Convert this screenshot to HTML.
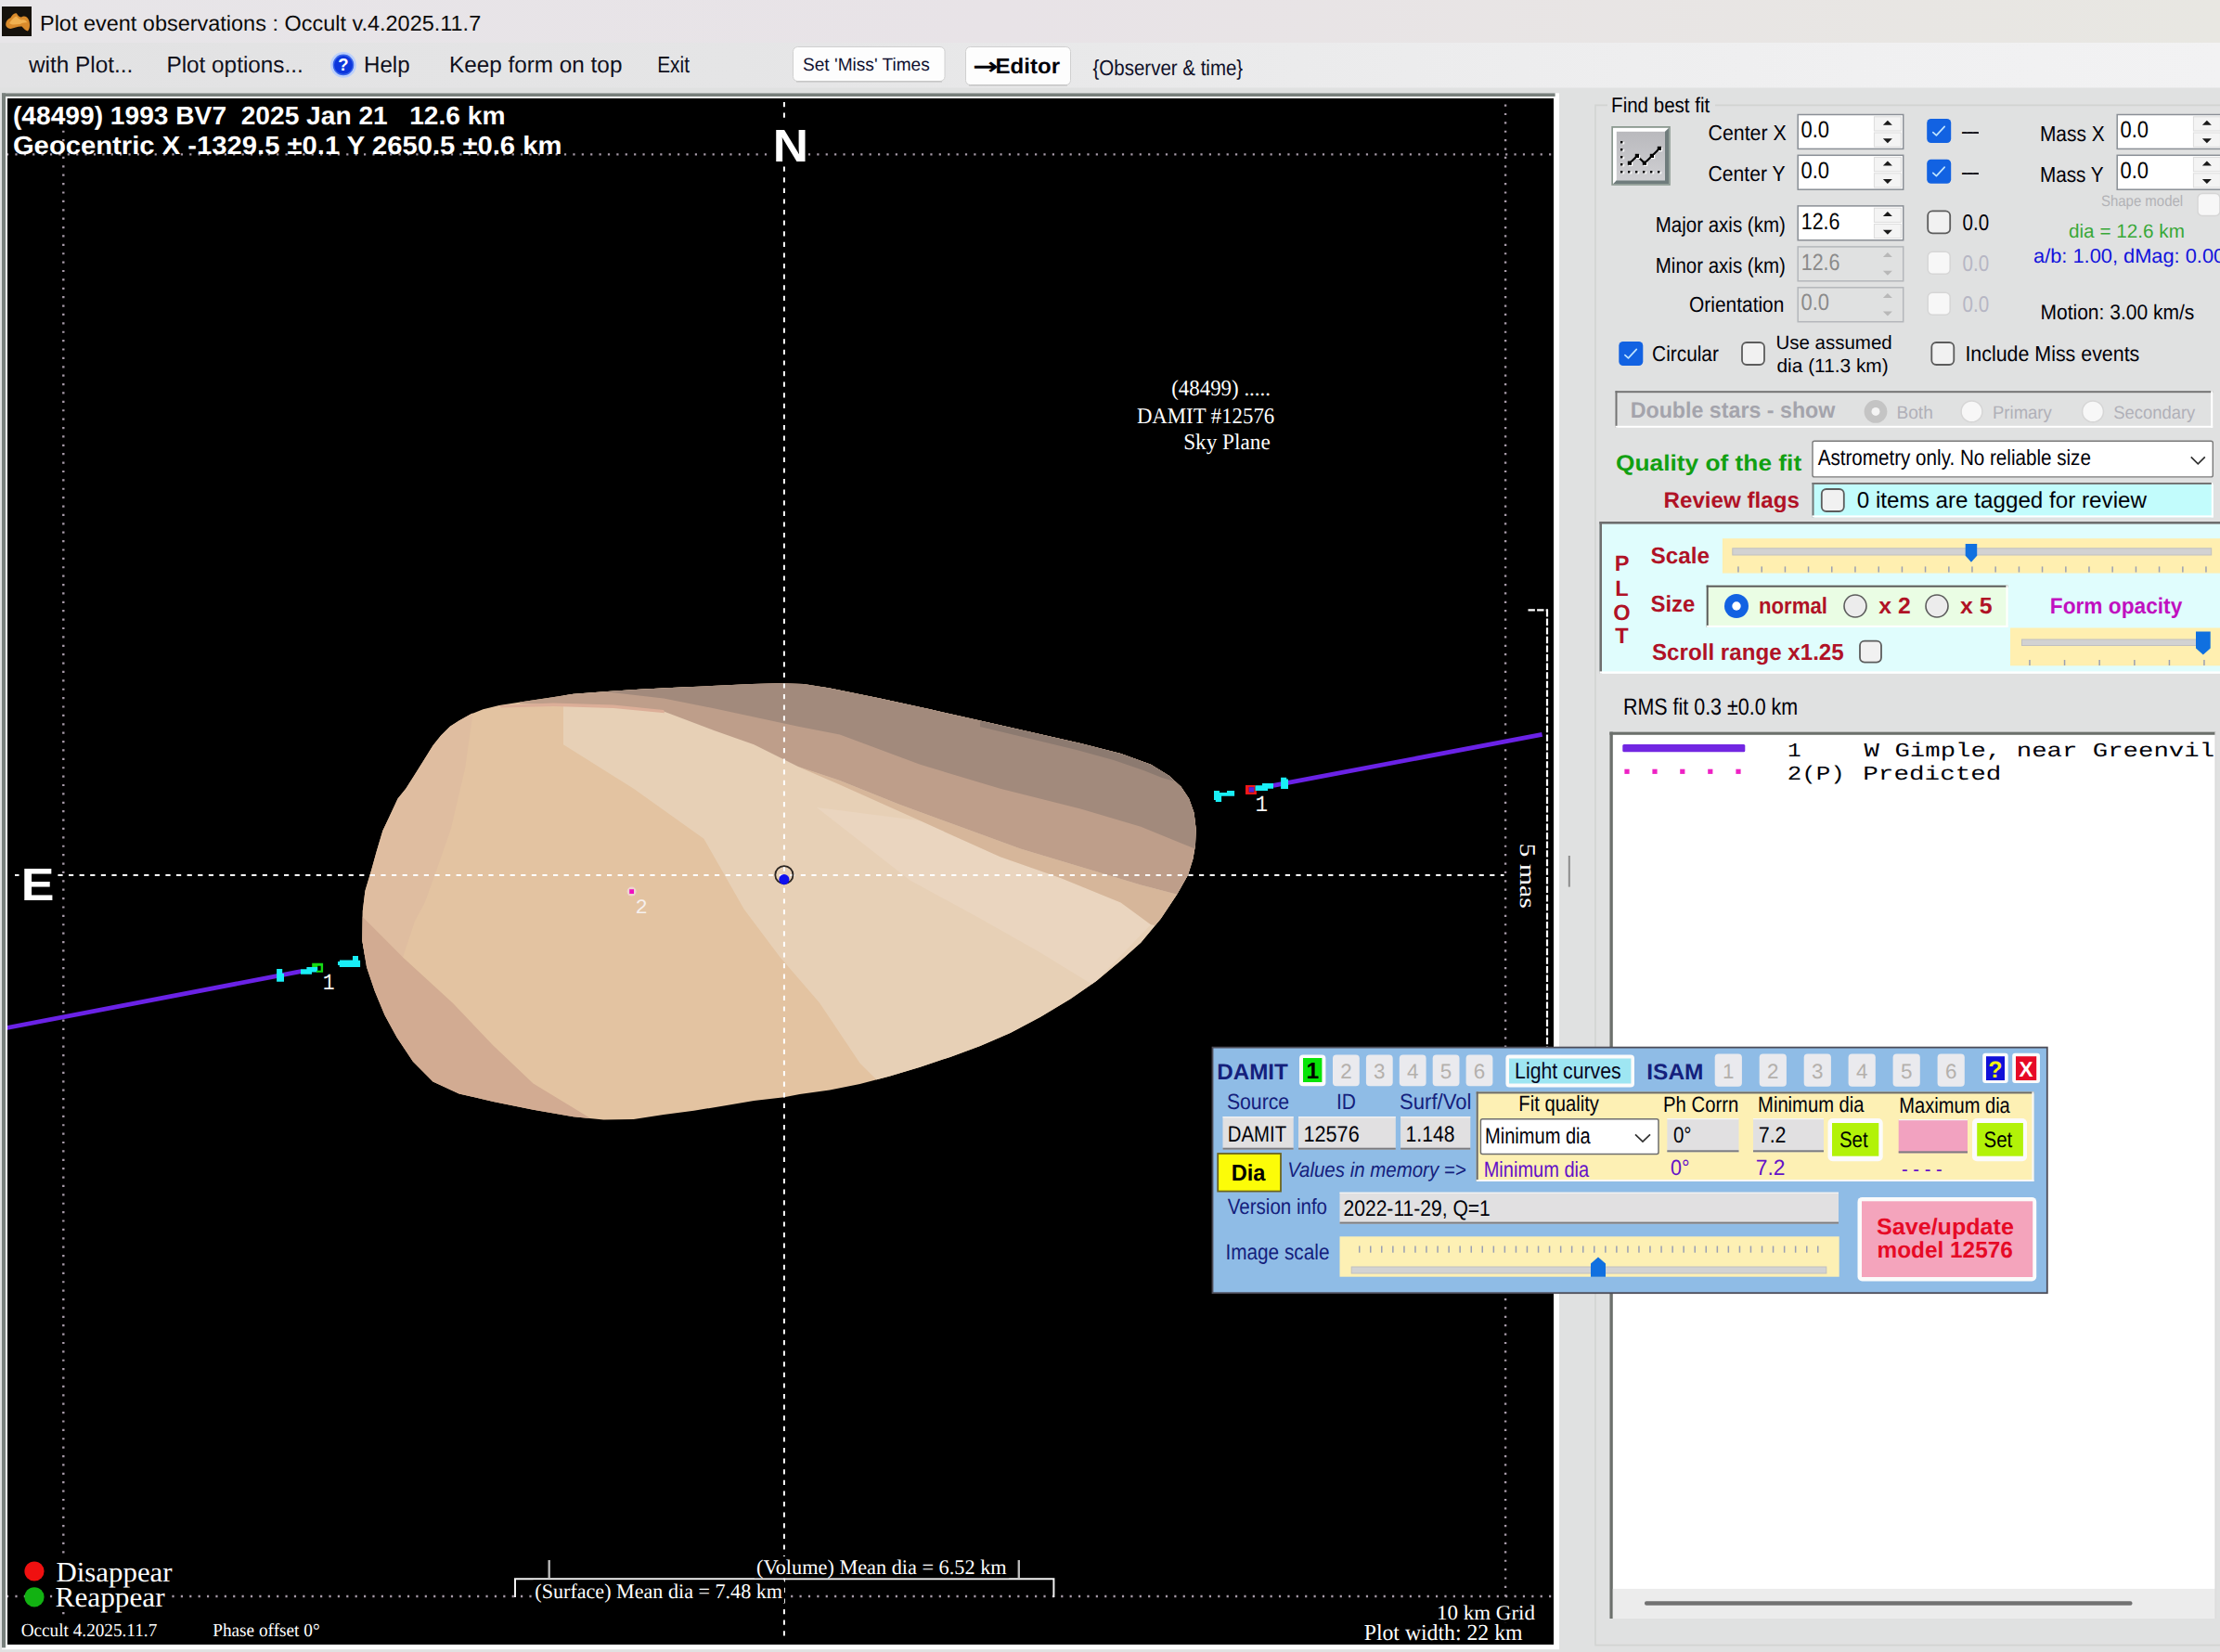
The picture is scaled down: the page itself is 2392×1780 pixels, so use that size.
<!DOCTYPE html>
<html lang="en">
<head>
<meta charset="utf-8">
<title>Plot event observations : Occult v.4.2025.11.7</title>
<style>
html, body { margin: 0; padding: 0; background: #e0e1e1; }
body { width: 2392px; height: 1780px; font-family: "Liberation Sans", Arial, sans-serif; }
svg { display: block; }
text { white-space: pre; }
</style>
</head>
<body>
<svg width="2392" height="1780" viewBox="0 0 2392 1780" shape-rendering="auto" text-rendering="geometricPrecision">
<rect x="0.0" y="0.0" width="2392.0" height="1780.0" fill="#e0e1e1"/>
<linearGradient id="tbar" x1="0" y1="0" x2="1" y2="0"><stop offset="0" stop-color="#e7e5e8"/><stop offset="0.45" stop-color="#e8e3e7"/><stop offset="1" stop-color="#e8e7e2"/></linearGradient>
<linearGradient id="mbar" x1="0" y1="0" x2="1" y2="0"><stop offset="0" stop-color="#e2e2e3"/><stop offset="0.33" stop-color="#e5e5e6"/><stop offset="0.585" stop-color="#ebebec"/><stop offset="0.836" stop-color="#f0f0f1"/><stop offset="1" stop-color="#f2f2f3"/></linearGradient>
<rect x="0.0" y="0.0" width="2392.0" height="46.0" fill="url(#tbar)"/>
<rect x="0.0" y="46.0" width="2392.0" height="48.5" fill="url(#mbar)"/>
<rect x="2.0" y="7.0" width="32.0" height="32.0" fill="#15110c"/>
<path d="M6.5 28 C5.5 24 8 20.5 11.5 19 C13 16 15.5 13.5 18 14.5 C19.5 17 21 18.5 23 18.5 C26 16.5 29.5 18 31 21.5 C32.5 25.5 32.5 30.5 30 33.5 C27 33 25.5 30.5 23.5 28.5 C20 28 15.5 30 11.5 31 C9.5 31 7.5 30 6.5 28 Z" fill="#d98a2b"/>
<path d="M10 25 C12.5 21 15.5 18 18 17.5 C19 19.5 21 21 23.5 21.5 C26 20.5 28.5 22 29.5 24.5 C27 24 24 25 21.5 26 C17.5 26 13.5 27.5 10 25 Z" fill="#f0b050"/>
<text x="43.0" y="32.7" font-size="23.2" fill="#0a0a0a" font-family='"Liberation Sans", Arial, sans-serif' textLength="475.2" lengthAdjust="spacingAndGlyphs" xml:space="preserve">Plot event observations : Occult v.4.2025.11.7</text>
<text x="31.0" y="77.6" font-size="24.6" fill="#10101c" font-family='"Liberation Sans", Arial, sans-serif' textLength="112.4" lengthAdjust="spacingAndGlyphs" xml:space="preserve">with Plot...</text>
<text x="179.5" y="77.6" font-size="24.6" fill="#10101c" font-family='"Liberation Sans", Arial, sans-serif' textLength="147.2" lengthAdjust="spacingAndGlyphs" xml:space="preserve">Plot options...</text>
<circle cx="370" cy="69.9" r="12.4" fill="#0c36dc" stroke="#bcd0fa" stroke-width="3"/>
<circle cx="370" cy="69.9" r="10.6" fill="none" stroke="#3a66ea" stroke-width="1.4"/>
<text x="370.0" y="76.4" font-size="18.5" fill="#ffffff" font-family='"Liberation Sans", Arial, sans-serif' font-weight="bold" text-anchor="middle" xml:space="preserve">?</text>
<text x="392.0" y="77.6" font-size="24.6" fill="#10101c" font-family='"Liberation Sans", Arial, sans-serif' textLength="49.6" lengthAdjust="spacingAndGlyphs" xml:space="preserve">Help</text>
<text x="484.0" y="77.6" font-size="24.6" fill="#10101c" font-family='"Liberation Sans", Arial, sans-serif' textLength="186.4" lengthAdjust="spacingAndGlyphs" xml:space="preserve">Keep form on top</text>
<text x="708.2" y="77.6" font-size="24.6" fill="#10101c" font-family='"Liberation Sans", Arial, sans-serif' textLength="34.8" lengthAdjust="spacingAndGlyphs" xml:space="preserve">Exit</text>
<rect x="854.5" y="50.5" width="163.5" height="37.0" fill="#fdfdfd" stroke="#d0d0d0" stroke-width="1" rx="5"/>
<line x1="858.0" y1="88.0" x2="1015.0" y2="88.0" stroke="#bdbdbd" stroke-width="1.2" />
<text x="865.0" y="76.2" font-size="19.4" fill="#101030" font-family='"Liberation Sans", Arial, sans-serif' textLength="136.8" lengthAdjust="spacingAndGlyphs" xml:space="preserve">Set &#x27;Miss&#x27; Times</text>
<rect x="1040.5" y="50.5" width="113.0" height="41.0" fill="#fdfdfd" stroke="#d0d0d0" stroke-width="1" rx="5"/>
<line x1="1044.0" y1="92.0" x2="1150.0" y2="92.0" stroke="#bdbdbd" stroke-width="1.2" />
<text x="1047.9" y="79.6" font-size="25" fill="#000008" font-family='"DejaVu Sans", "Liberation Sans", sans-serif' font-weight="bold" textLength="27.6" lengthAdjust="spacingAndGlyphs" xml:space="preserve">→</text>
<text x="1072.6" y="79.0" font-size="23.2" fill="#000008" font-family='"Liberation Sans", Arial, sans-serif' font-weight="bold" textLength="69.4" lengthAdjust="spacingAndGlyphs" xml:space="preserve">Editor</text>
<text x="1177.5" y="81.4" font-size="23.4" fill="#101028" font-family='"Liberation Sans", Arial, sans-serif' textLength="161.7" lengthAdjust="spacingAndGlyphs" xml:space="preserve">{Observer &amp; time}</text>
<rect x="2.0" y="100.4" width="1678.0" height="1676.8" fill="#ffffff"/>
<rect x="2.0" y="100.4" width="1673.6" height="3.6" fill="#78807c"/>
<rect x="2.0" y="100.4" width="4.0" height="1675.0" fill="#78807c"/>
<rect x="8.0" y="106.0" width="1666.0" height="1666.0" fill="#000000"/>
<clipPath id="plotclip"><rect x="8" y="106" width="1666" height="1666"/></clipPath>
<g clip-path="url(#plotclip)">
<line x1="68.3" y1="112.5" x2="68.3" y2="1772.0" stroke="#a79aa8" stroke-width="2.4" stroke-dasharray="2.2 7.19"/>
<line x1="1622.1" y1="112.5" x2="1622.1" y2="1772.0" stroke="#a79aa8" stroke-width="2.4" stroke-dasharray="2.2 7.19"/>
<line x1="7.0" y1="166.4" x2="1674.0" y2="166.4" stroke="#a79aa8" stroke-width="2.4" stroke-dasharray="2.2 7.19"/>
<line x1="7.0" y1="1720.0" x2="1674.0" y2="1720.0" stroke="#a79aa8" stroke-width="2.4" stroke-dasharray="2.2 7.19"/>
<clipPath id="body"><path d="M840.0 736.2 L866.0 736.9 L894.0 741.6 L948.1 752.4 L1002.2 764.3 L1056.2 776.6 L1110.3 788.8 L1164.3 801.1 L1207.6 811.9 L1240.0 823.8 L1259.5 835.7 L1272.4 847.6 L1281.1 860.5 L1286.5 875.7 L1288.6 893.0 L1288.0 910.3 L1285.4 925.4 L1280.0 942.7 L1268.1 963.8 L1250.8 989.7 L1229.2 1015.7 L1207.6 1035.1 L1181.6 1056.8 L1153.5 1076.2 L1121.1 1095.7 L1088.6 1113.0 L1056.2 1127.0 L1023.8 1138.9 L991.4 1149.7 L958.9 1159.5 L926.5 1168.1 L894.1 1174.6 L861.6 1178.9 L844.9 1182.3 L812.4 1186.0 L780.0 1191.4 L747.6 1196.8 L715.1 1201.1 L682.7 1206.0 L650.3 1206.5 L617.8 1203.2 L574.6 1195.7 L531.4 1187.0 L494.6 1178.4 L466.5 1165.4 L444.9 1143.8 L427.6 1117.8 L414.6 1094.0 L403.8 1068.1 L395.1 1042.2 L390.4 1014.0 L390.8 981.6 L393.4 960.0 L400.5 936.2 L405.9 916.8 L412.4 895.1 L420.0 878.9 L428.6 860.5 L437.3 849.7 L447.0 834.6 L457.8 817.3 L466.5 803.2 L475.1 792.4 L484.9 782.7 L494.6 776.6 L507.6 769.3 L520.5 764.3 L537.8 760.0 L570.3 755.0 L594.0 751.4 L617.8 747.7 L654.6 744.9 L689.2 742.7 L723.8 741.0 L767.0 739.0 L810.3 736.9 Z"/></clipPath>
<path d="M840.0 736.2 L866.0 736.9 L894.0 741.6 L948.1 752.4 L1002.2 764.3 L1056.2 776.6 L1110.3 788.8 L1164.3 801.1 L1207.6 811.9 L1240.0 823.8 L1259.5 835.7 L1272.4 847.6 L1281.1 860.5 L1286.5 875.7 L1288.6 893.0 L1288.0 910.3 L1285.4 925.4 L1280.0 942.7 L1268.1 963.8 L1250.8 989.7 L1229.2 1015.7 L1207.6 1035.1 L1181.6 1056.8 L1153.5 1076.2 L1121.1 1095.7 L1088.6 1113.0 L1056.2 1127.0 L1023.8 1138.9 L991.4 1149.7 L958.9 1159.5 L926.5 1168.1 L894.1 1174.6 L861.6 1178.9 L844.9 1182.3 L812.4 1186.0 L780.0 1191.4 L747.6 1196.8 L715.1 1201.1 L682.7 1206.0 L650.3 1206.5 L617.8 1203.2 L574.6 1195.7 L531.4 1187.0 L494.6 1178.4 L466.5 1165.4 L444.9 1143.8 L427.6 1117.8 L414.6 1094.0 L403.8 1068.1 L395.1 1042.2 L390.4 1014.0 L390.8 981.6 L393.4 960.0 L400.5 936.2 L405.9 916.8 L412.4 895.1 L420.0 878.9 L428.6 860.5 L437.3 849.7 L447.0 834.6 L457.8 817.3 L466.5 803.2 L475.1 792.4 L484.9 782.7 L494.6 776.6 L507.6 769.3 L520.5 764.3 L537.8 760.0 L570.3 755.0 L594.0 751.4 L617.8 747.7 L654.6 744.9 L689.2 742.7 L723.8 741.0 L767.0 739.0 L810.3 736.9 Z" fill="#e3c3a1" />
<g clip-path="url(#body)">
<path d="M380.0 720.0 L511.0 720.0 L509.7 767.6 L501.1 828.1 L485.9 893.0 L470.8 936.2 L458.0 972.0 L447.0 992.4 L434.1 1031.4 L380.0 1031.4 Z" fill="#dfbda0" />
<path d="M380.0 978.0 L390.8 988.1 L434.1 1031.4 L488.1 1081.1 L531.4 1126.5 L574.6 1167.6 L635.1 1204.3 L640.0 1230.0 L380.0 1230.0 Z" fill="#d2ab92" />
<path d="M607.0 761.1 L607.0 802.2 L682.7 849.7 L758.4 903.8 L801.6 979.5 L840.0 1030.8 L883.0 1080.5 L926.5 1145.4 L943.8 1162.7 L950.0 1180.0 L1320.0 1180.0 L1320.0 740.0 L607.0 740.0 Z" fill="#e7d0b6" />
<path d="M880.0 870.0 L991.4 884.3 L1077.8 923.2 L1142.7 946.0 L1207.6 972.4 L1240.0 996.2 L1177.3 1061.0 L1121.1 1026.5 L1056.2 989.7 L980.5 948.6 Z" fill="#ead5bf" />
<path d="M862.0 827.0 L904.9 845.4 L991.4 884.3 L1077.8 923.2 L1142.7 946.0 L1207.6 972.4 L1240.0 996.2 L1320.0 1010.0 L1320.0 975.0 L1320.0 975.0 L1270.3 964.3 L1229.2 953.5 L1164.3 934.0 L1099.5 914.6 L1034.6 890.8 L969.7 867.0 L904.9 841.1 L860.0 825.9 Z" fill="#d6b69a" />
<path d="M596.2 758.9 L661.0 761.0 L715.1 766.5 L769.2 787.0 L812.4 802.2 L860.0 825.9 L904.9 841.1 L969.7 867.0 L1034.6 890.8 L1099.5 914.6 L1164.3 934.0 L1229.2 953.5 L1270.3 964.3 L1320.0 975.0 L1320.0 700.0 L560.0 700.0 L560.0 758.0 Z" fill="#be9e8a" />
<path d="M654.0 745.5 L715.1 752.4 L769.2 763.2 L860.0 782.7 L904.9 791.4 L991.4 823.8 L1077.8 849.7 L1164.3 871.4 L1229.2 890.8 L1287.6 914.6 L1320.0 925.0 L1320.0 700.0 L560.0 700.0 L560.0 745.0 Z" fill="#a28a7c" />
<path d="M1056.2 776.6 L1110.3 788.8 L1164.3 801.1 L1207.6 811.9 L1240.0 823.8 L1259.5 835.7 L1266.0 842.0 L1252.0 838.0 L1232.0 830.0 L1200.0 819.0 L1160.0 808.0 L1106.0 795.0 L1056.0 783.0 Z" fill="#8c7a70" />
<path d="M537.8 760.0 L596.0 757.5 L661.0 759.6 L715.1 765.0 L716.0 768.2 L661.0 763.0 L596.0 761.0 L540.0 762.6 Z" fill="#dcae98" />
</g>
<line x1="844.9" y1="110.0" x2="844.9" y2="1766.0" stroke="#ffffff" stroke-width="2" stroke-dasharray="5.2 6.4"/>
<line x1="16.0" y1="943.1" x2="1620.5" y2="943.1" stroke="#ffffff" stroke-width="2" stroke-dasharray="5.2 6.4"/>
<rect x="13.0" y="110.0" width="533.0" height="30.0" fill="#000"/>
<text x="14.0" y="133.8" font-size="27.6" fill="#ffffff" font-family='"Liberation Sans", Arial, sans-serif' font-weight="bold" textLength="530.5" lengthAdjust="spacingAndGlyphs" xml:space="preserve">(48499) 1993 BV7  2025 Jan 21   12.6 km</text>
<text x="13.9" y="166.2" font-size="27.6" fill="#ffffff" font-family='"Liberation Sans", Arial, sans-serif' font-weight="bold" textLength="591.6" lengthAdjust="spacingAndGlyphs" xml:space="preserve">Geocentric X -1329.5 ±0.1 Y 2650.5 ±0.6 km</text>
<rect x="826.5" y="131.0" width="43.5" height="45.0" fill="#000"/>
<text x="832.7" y="174.1" font-size="49.4" fill="#ffffff" font-family='"Liberation Sans", Arial, sans-serif' font-weight="bold" textLength="38.3" lengthAdjust="spacingAndGlyphs" xml:space="preserve">N</text>
<rect x="20.5" y="930.0" width="41.5" height="44.0" fill="#000"/>
<text x="22.7" y="970.0" font-size="49.4" fill="#ffffff" font-family='"Liberation Sans", Arial, sans-serif' font-weight="bold" textLength="35.7" lengthAdjust="spacingAndGlyphs" xml:space="preserve">E</text>
<text x="1262.2" y="426.0" font-size="24" fill="#ffffff" font-family='"Liberation Serif", "Times New Roman", serif' textLength="106.8" lengthAdjust="spacingAndGlyphs" xml:space="preserve">(48499) .....</text>
<text x="1224.9" y="455.7" font-size="24" fill="#ffffff" font-family='"Liberation Serif", "Times New Roman", serif' textLength="148.3" lengthAdjust="spacingAndGlyphs" xml:space="preserve">DAMIT #12576</text>
<text x="1275.2" y="483.8" font-size="24" fill="#ffffff" font-family='"Liberation Serif", "Times New Roman", serif' textLength="93.5" lengthAdjust="spacingAndGlyphs" xml:space="preserve">Sky Plane</text>
<line x1="7.0" y1="1107.6" x2="324.3" y2="1046.6" stroke="#6a22e6" stroke-width="4.8" />
<line x1="1371.9" y1="846.4" x2="1661.6" y2="791.3" stroke="#6a22e6" stroke-width="4.8" />
<path d="M298.1 1044 H304.2 V1049 H306 V1057.8 H298.1 Z" fill="#19eef6"/>
<path d="M324 1044.3 L330.4 1044.3 L330.4 1042 L342.2 1042 L342.2 1047.6 L336 1047.6 L336 1049.8 L324 1049.8 Z" fill="#19eef6"/>
<path d="M336.2 1037.8 H348.1 V1047.8 H341 V1045.7 H345.7 V1040.8 H342.2 V1042 H336.2 Z" fill="#14dc14"/>
<path d="M364 1036 L366 1036 L366 1034.4 L380 1034.4 L380 1030 L386 1030 L386 1034.8 L388.1 1034.8 L388.1 1041.9 L365.8 1041.9 L365.8 1040 L364 1040 Z" fill="#19eef6"/>
<text x="347.7" y="1066.2" font-size="24.6" fill="#f4f4f4" font-family='"Liberation Mono", "Courier New", monospace' textLength="12.9" lengthAdjust="spacingAndGlyphs" xml:space="preserve">1</text>
<path d="M1380.1 837.8 H1386.2 V839.6 H1388 V850 H1380.1 Z" fill="#19eef6"/>
<path d="M1352.3 846.2 L1360 846.2 L1360 844 L1372 844 L1372 849.8 L1366 849.8 L1366 852 L1352.3 852 Z" fill="#19eef6"/>
<path d="M1342 846 H1353.9 V846.2 H1352.3 V852 H1353.9 V856 H1342 Z M1345.8 848.1 V853.5 H1351.2 V848.1 Z" fill="#f21818" fill-rule="evenodd"/>
<rect x="1345.8" y="848.1" width="5.4" height="5.4" fill="#5a20d8"/>
<path d="M1308 851.9 L1314 851.9 L1314 854 L1322 854 L1322 851.9 L1330.1 851.9 L1330.1 857.8 L1316.1 857.8 L1316.1 864 L1309.8 864 L1309.8 862 L1308 862 Z" fill="#19eef6"/>
<text x="1352.4" y="874.1" font-size="24.6" fill="#f4f4f4" font-family='"Liberation Mono", "Courier New", monospace' textLength="13.6" lengthAdjust="spacingAndGlyphs" xml:space="preserve">1</text>
<circle cx="680.6" cy="960.6" r="5" fill="#f0d8dc" opacity="0.8"/>
<rect x="678.2" y="958.2" width="4.8" height="4.8" fill="#f010c0"/>
<text x="685.0" y="983.8" font-size="21" fill="#f6f0ee" font-family='"Liberation Sans", Arial, sans-serif' textLength="12.3" lengthAdjust="spacingAndGlyphs" xml:space="preserve">2</text>
<circle cx="844.9" cy="942.7" r="9.6" fill="none" stroke="#2a2420" stroke-width="1.8"/>
<circle cx="844.9" cy="947.6" r="5.6" fill="#1010ee"/>
<line x1="1646.5" y1="657.4" x2="1668.0" y2="657.4" stroke="#ffffff" stroke-width="2.2" stroke-dasharray="7.4 2.2"/>
<line x1="1667.0" y1="657.0" x2="1667.0" y2="1229.0" stroke="#ffffff" stroke-width="2.2" stroke-dasharray="7.4 2.2"/>
<g transform="translate(1637.6 909.8) rotate(90)">
<text x="-1.2" y="0.0" font-size="24" fill="#ffffff" font-family='"Liberation Serif", "Times New Roman", serif' textLength="70.3" lengthAdjust="spacingAndGlyphs" xml:space="preserve">5 mas</text>
</g>
<circle cx="37" cy="1693" r="10.6" fill="#f01010"/>
<circle cx="37" cy="1720.8" r="10.6" fill="#12b212"/>
<rect x="58.5" y="1679.0" width="129.0" height="28.0" fill="#000"/>
<rect x="58.5" y="1707.0" width="122.0" height="30.0" fill="#000"/>
<rect x="21.0" y="1746.0" width="150.0" height="22.0" fill="#000"/>
<rect x="227.5" y="1746.0" width="118.0" height="22.0" fill="#000"/>
<text x="60.5" y="1703.7" font-size="30.5" fill="#ffffff" font-family='"Liberation Serif", "Times New Roman", serif' textLength="125.1" lengthAdjust="spacingAndGlyphs" xml:space="preserve">Disappear</text>
<text x="59.5" y="1731.4" font-size="30.5" fill="#ffffff" font-family='"Liberation Serif", "Times New Roman", serif' textLength="118.2" lengthAdjust="spacingAndGlyphs" xml:space="preserve">Reappear</text>
<text x="22.7" y="1763.4" font-size="20" fill="#ffffff" font-family='"Liberation Serif", "Times New Roman", serif' textLength="146.6" lengthAdjust="spacingAndGlyphs" xml:space="preserve">Occult 4.2025.11.7</text>
<text x="229.2" y="1763.4" font-size="20" fill="#ffffff" font-family='"Liberation Serif", "Times New Roman", serif' textLength="115.4" lengthAdjust="spacingAndGlyphs" xml:space="preserve">Phase offset 0°</text>
<path d="M555 1721 L555 1701.3 L1135.4 1701.3 L1135.4 1721" fill="none" stroke="#f2f2f2" stroke-width="2"/>
<line x1="591.7" y1="1681.0" x2="591.7" y2="1700.5" stroke="#b8b8b8" stroke-width="2.4" />
<line x1="1097.8" y1="1681.0" x2="1097.8" y2="1700.5" stroke="#b8b8b8" stroke-width="2.4" />
<rect x="813.0" y="1677.0" width="274.0" height="23.2" fill="#000"/>
<rect x="574.5" y="1702.6" width="270.5" height="24.4" fill="#000"/>
<text x="815.1" y="1695.8" font-size="22.4" fill="#ffffff" font-family='"Liberation Serif", "Times New Roman", serif' textLength="269.5" lengthAdjust="spacingAndGlyphs" xml:space="preserve">(Volume) Mean dia = 6.52 km</text>
<text x="576.3" y="1721.5" font-size="22.4" fill="#ffffff" font-family='"Liberation Serif", "Times New Roman", serif' textLength="266.7" lengthAdjust="spacingAndGlyphs" xml:space="preserve">(Surface) Mean dia = 7.48 km</text>
<rect x="1548.0" y="1726.0" width="107.5" height="22.5" fill="#000"/>
<rect x="1468.0" y="1748.5" width="174.0" height="23.0" fill="#000"/>
<text x="1547.9" y="1745.1" font-size="22.4" fill="#ffffff" font-family='"Liberation Serif", "Times New Roman", serif' textLength="106.1" lengthAdjust="spacingAndGlyphs" xml:space="preserve">10 km Grid</text>
<text x="1469.7" y="1767.0" font-size="24.4" fill="#ffffff" font-family='"Liberation Serif", "Times New Roman", serif' textLength="170.8" lengthAdjust="spacingAndGlyphs" xml:space="preserve">Plot width: 22 km</text>
</g>
<rect x="1689.8" y="922.0" width="2.0" height="33.6" fill="#8c8c8c"/>
<path d="M1732 113.4 L1719 113.4 L1719 1772.6 L2392 1772.6" fill="none" stroke="#d2d4d2" stroke-width="1.6"/>
<line x1="1848.0" y1="113.4" x2="2392.0" y2="113.4" stroke="#d2d4d2" stroke-width="1.6" />
<text x="1736.1" y="121.0" font-size="22.8" fill="#000008" font-family='"Liberation Sans", Arial, sans-serif' textLength="106.1" lengthAdjust="spacingAndGlyphs" xml:space="preserve">Find best fit</text>
<rect x="1736.3" y="136.0" width="63.5" height="63.8" fill="#8a988f"/>
<rect x="1738.0" y="137.8" width="60.2" height="60.4" fill="#ffffff"/>
<path d="M1798.2 137.8 V198.2 H1738 L1741.8 194.2 H1794 V141.8 Z" fill="#6f7c7c"/>
<linearGradient id="btng" x1="0" y1="0" x2="0" y2="1"><stop offset="0" stop-color="#b9b9bd"/><stop offset="1" stop-color="#cfcfd2"/></linearGradient>
<rect x="1741.8" y="141.8" width="52.2" height="52.4" fill="url(#btng)"/>
<rect x="1747.6" y="152.8" width="2.6" height="2.6" fill="#ffffff"/>
<rect x="1746.0" y="152.0" width="2.4" height="2.4" fill="#000000"/>
<rect x="1747.6" y="160.8" width="2.6" height="2.6" fill="#ffffff"/>
<rect x="1746.0" y="160.0" width="2.4" height="2.4" fill="#000000"/>
<rect x="1747.6" y="168.8" width="2.6" height="2.6" fill="#ffffff"/>
<rect x="1746.0" y="168.0" width="2.4" height="2.4" fill="#000000"/>
<rect x="1747.6" y="176.8" width="2.6" height="2.6" fill="#ffffff"/>
<rect x="1746.0" y="176.0" width="2.4" height="2.4" fill="#000000"/>
<rect x="1747.6" y="184.8" width="2.6" height="2.6" fill="#ffffff"/>
<rect x="1746.0" y="184.0" width="2.4" height="2.4" fill="#000000"/>
<rect x="1755.6" y="184.8" width="2.6" height="2.6" fill="#ffffff"/>
<rect x="1754.0" y="184.0" width="2.4" height="2.4" fill="#000000"/>
<rect x="1763.6" y="184.8" width="2.6" height="2.6" fill="#ffffff"/>
<rect x="1762.0" y="184.0" width="2.4" height="2.4" fill="#000000"/>
<rect x="1771.6" y="184.8" width="2.6" height="2.6" fill="#ffffff"/>
<rect x="1770.0" y="184.0" width="2.4" height="2.4" fill="#000000"/>
<rect x="1779.6" y="184.8" width="2.6" height="2.6" fill="#ffffff"/>
<rect x="1778.0" y="184.0" width="2.4" height="2.4" fill="#000000"/>
<rect x="1787.6" y="184.8" width="2.6" height="2.6" fill="#ffffff"/>
<rect x="1786.0" y="184.0" width="2.4" height="2.4" fill="#000000"/>
<path d="M1756 175.8 L1764 168 L1772 175.8 L1780 168 L1788 160" fill="none" stroke="#000000" stroke-width="2.1"/>
<rect x="1755.0" y="174.8" width="4.2" height="4.2" fill="#ffffff"/>
<rect x="1753.8" y="173.6" width="4.2" height="4.2" fill="#000000"/>
<rect x="1763.0" y="167.0" width="4.2" height="4.2" fill="#ffffff"/>
<rect x="1761.8" y="165.8" width="4.2" height="4.2" fill="#000000"/>
<rect x="1771.0" y="174.8" width="4.2" height="4.2" fill="#ffffff"/>
<rect x="1769.8" y="173.6" width="4.2" height="4.2" fill="#000000"/>
<rect x="1779.0" y="167.0" width="4.2" height="4.2" fill="#ffffff"/>
<rect x="1777.8" y="165.8" width="4.2" height="4.2" fill="#000000"/>
<rect x="1787.0" y="159.0" width="4.2" height="4.2" fill="#ffffff"/>
<rect x="1785.8" y="157.8" width="4.2" height="4.2" fill="#000000"/>
<text x="1840.5" y="151.3" font-size="23.2" fill="#000008" font-family='"Liberation Sans", Arial, sans-serif' textLength="84.3" lengthAdjust="spacingAndGlyphs" xml:space="preserve">Center X</text>
<rect x="1937.2" y="123.5" width="113.5" height="36.9" fill="#ffffff" stroke="#8a8f96" stroke-width="1.5"/>
<rect x="2019.4" y="125.8" width="29.0" height="15.2" fill="#f4f4f4" stroke="#dcdcdc" stroke-width="1"/>
<rect x="2019.4" y="143.0" width="29.0" height="15.2" fill="#f4f4f4" stroke="#dcdcdc" stroke-width="1"/>
<path d="M2028.9 134.7 l5 -5 l5 5 z" fill="#1a1a1a"/>
<path d="M2028.9 149.3 l5 5 l5 -5 z" fill="#1a1a1a"/>
<text x="1940.5" y="148.2" font-size="25" fill="#000" font-family='"Liberation Sans", Arial, sans-serif' textLength="30.5" lengthAdjust="spacingAndGlyphs" xml:space="preserve">0.0</text>
<rect x="2076.2" y="128.0" width="26.0" height="26.0" fill="#1262e2" rx="4.5"/>
<path d="M2082.8 142.6 l3.6 3.2 l8.8 -9.4" fill="none" stroke="#bfe4ff" stroke-width="1.7" stroke-linecap="round" stroke-linejoin="round"/>
<text x="2113.3" y="149.0" font-size="22" fill="#000008" font-family='"Liberation Sans", Arial, sans-serif' textLength="18.8" lengthAdjust="spacingAndGlyphs" xml:space="preserve">---</text>
<rect x="2114.4" y="142.2" width="17.6" height="1.8" fill="#14141c"/>
<text x="2197.9" y="152.3" font-size="23.2" fill="#000008" font-family='"Liberation Sans", Arial, sans-serif' textLength="69.7" lengthAdjust="spacingAndGlyphs" xml:space="preserve">Mass X</text>
<rect x="2281.2" y="123.5" width="113.5" height="36.9" fill="#ffffff" stroke="#8a8f96" stroke-width="1.5"/>
<rect x="2363.4" y="125.8" width="29.0" height="15.2" fill="#f4f4f4" stroke="#dcdcdc" stroke-width="1"/>
<rect x="2363.4" y="143.0" width="29.0" height="15.2" fill="#f4f4f4" stroke="#dcdcdc" stroke-width="1"/>
<path d="M2372.9 134.7 l5 -5 l5 5 z" fill="#1a1a1a"/>
<path d="M2372.9 149.3 l5 5 l5 -5 z" fill="#1a1a1a"/>
<text x="2284.5" y="148.2" font-size="25" fill="#000" font-family='"Liberation Sans", Arial, sans-serif' textLength="30.5" lengthAdjust="spacingAndGlyphs" xml:space="preserve">0.0</text>
<text x="1840.5" y="195.4" font-size="23.2" fill="#000008" font-family='"Liberation Sans", Arial, sans-serif' textLength="83.0" lengthAdjust="spacingAndGlyphs" xml:space="preserve">Center Y</text>
<rect x="1937.2" y="167.3" width="113.5" height="36.9" fill="#ffffff" stroke="#8a8f96" stroke-width="1.5"/>
<rect x="2019.4" y="169.6" width="29.0" height="15.2" fill="#f4f4f4" stroke="#dcdcdc" stroke-width="1"/>
<rect x="2019.4" y="186.8" width="29.0" height="15.2" fill="#f4f4f4" stroke="#dcdcdc" stroke-width="1"/>
<path d="M2028.9 178.5 l5 -5 l5 5 z" fill="#1a1a1a"/>
<path d="M2028.9 193.1 l5 5 l5 -5 z" fill="#1a1a1a"/>
<text x="1940.5" y="192.0" font-size="25" fill="#000" font-family='"Liberation Sans", Arial, sans-serif' textLength="30.5" lengthAdjust="spacingAndGlyphs" xml:space="preserve">0.0</text>
<rect x="2076.2" y="171.8" width="26.0" height="26.0" fill="#1262e2" rx="4.5"/>
<path d="M2082.8 186.4 l3.6 3.2 l8.8 -9.4" fill="none" stroke="#bfe4ff" stroke-width="1.7" stroke-linecap="round" stroke-linejoin="round"/>
<text x="2113.3" y="193.0" font-size="22" fill="#000008" font-family='"Liberation Sans", Arial, sans-serif' textLength="18.8" lengthAdjust="spacingAndGlyphs" xml:space="preserve">---</text>
<rect x="2114.4" y="186.2" width="17.6" height="1.8" fill="#14141c"/>
<text x="2197.9" y="196.2" font-size="23.2" fill="#000008" font-family='"Liberation Sans", Arial, sans-serif' textLength="68.8" lengthAdjust="spacingAndGlyphs" xml:space="preserve">Mass Y</text>
<rect x="2281.2" y="167.3" width="113.5" height="36.9" fill="#ffffff" stroke="#8a8f96" stroke-width="1.5"/>
<rect x="2363.4" y="169.6" width="29.0" height="15.2" fill="#f4f4f4" stroke="#dcdcdc" stroke-width="1"/>
<rect x="2363.4" y="186.8" width="29.0" height="15.2" fill="#f4f4f4" stroke="#dcdcdc" stroke-width="1"/>
<path d="M2372.9 178.5 l5 -5 l5 5 z" fill="#1a1a1a"/>
<path d="M2372.9 193.1 l5 5 l5 -5 z" fill="#1a1a1a"/>
<text x="2284.5" y="192.0" font-size="25" fill="#000" font-family='"Liberation Sans", Arial, sans-serif' textLength="30.5" lengthAdjust="spacingAndGlyphs" xml:space="preserve">0.0</text>
<text x="2263.9" y="221.8" font-size="16.5" fill="#b2b2b6" font-family='"Liberation Sans", Arial, sans-serif' textLength="88.3" lengthAdjust="spacingAndGlyphs" xml:space="preserve">Shape model</text>
<rect x="2368.0" y="208.5" width="24.0" height="24.0" fill="#f7f7f7" stroke="#d6d6d6" stroke-width="1.5" rx="5"/>
<text x="1783.8" y="249.5" font-size="23.2" fill="#000008" font-family='"Liberation Sans", Arial, sans-serif' textLength="140.0" lengthAdjust="spacingAndGlyphs" xml:space="preserve">Major axis (km)</text>
<rect x="1937.2" y="221.9" width="113.5" height="36.9" fill="#ffffff" stroke="#8a8f96" stroke-width="1.5"/>
<rect x="2019.4" y="224.2" width="29.0" height="15.2" fill="#f4f4f4" stroke="#dcdcdc" stroke-width="1"/>
<rect x="2019.4" y="241.4" width="29.0" height="15.2" fill="#f4f4f4" stroke="#dcdcdc" stroke-width="1"/>
<path d="M2028.9 233.1 l5 -5 l5 5 z" fill="#1a1a1a"/>
<path d="M2028.9 247.7 l5 5 l5 -5 z" fill="#1a1a1a"/>
<text x="1940.7" y="246.6" font-size="25" fill="#000" font-family='"Liberation Sans", Arial, sans-serif' textLength="41.8" lengthAdjust="spacingAndGlyphs" xml:space="preserve">12.6</text>
<rect x="2077.2" y="227.3" width="24.0" height="24.0" fill="#f1f1f1" stroke="#5c5c5c" stroke-width="1.8" rx="5"/>
<text x="2114.6" y="248.3" font-size="24.4" fill="#000008" font-family='"Liberation Sans", Arial, sans-serif' textLength="28.6" lengthAdjust="spacingAndGlyphs" xml:space="preserve">0.0</text>
<text x="2229.0" y="256.0" font-size="20.6" fill="#38a838" font-family='"Liberation Sans", Arial, sans-serif' textLength="124.9" lengthAdjust="spacingAndGlyphs" xml:space="preserve">dia = 12.6 km</text>
<text x="2191.0" y="283.2" font-size="21.4" fill="#1212dc" font-family='"Liberation Sans", Arial, sans-serif' textLength="206.2" lengthAdjust="spacingAndGlyphs" xml:space="preserve">a/b: 1.00, dMag: 0.00</text>
<text x="1783.8" y="293.5" font-size="23.2" fill="#000008" font-family='"Liberation Sans", Arial, sans-serif' textLength="140.0" lengthAdjust="spacingAndGlyphs" xml:space="preserve">Minor axis (km)</text>
<rect x="1937.2" y="265.9" width="113.5" height="36.9" fill="#e0e1e1" stroke="#b4b7bb" stroke-width="1.5"/>
<path d="M2028.9 277.1 l5 -5 l5 5 z" fill="#b8b8b8"/>
<path d="M2028.9 291.7 l5 5 l5 -5 z" fill="#b8b8b8"/>
<text x="1940.7" y="290.6" font-size="25" fill="#8a8a8a" font-family='"Liberation Sans", Arial, sans-serif' textLength="41.8" lengthAdjust="spacingAndGlyphs" xml:space="preserve">12.6</text>
<rect x="2077.2" y="271.3" width="24.0" height="24.0" fill="#f7f7f7" stroke="#d6d6d6" stroke-width="1.5" rx="5"/>
<text x="2114.6" y="292.3" font-size="24.4" fill="#b6b6c4" font-family='"Liberation Sans", Arial, sans-serif' textLength="28.6" lengthAdjust="spacingAndGlyphs" xml:space="preserve">0.0</text>
<text x="1820.1" y="335.6" font-size="23.2" fill="#000008" font-family='"Liberation Sans", Arial, sans-serif' textLength="102.3" lengthAdjust="spacingAndGlyphs" xml:space="preserve">Orientation</text>
<rect x="1937.2" y="309.8" width="113.5" height="36.9" fill="#e0e1e1" stroke="#b4b7bb" stroke-width="1.5"/>
<path d="M2028.9 320.9 l5 -5 l5 5 z" fill="#b8b8b8"/>
<path d="M2028.9 335.5 l5 5 l5 -5 z" fill="#b8b8b8"/>
<text x="1940.5" y="334.4" font-size="25" fill="#8a8a8a" font-family='"Liberation Sans", Arial, sans-serif' textLength="30.5" lengthAdjust="spacingAndGlyphs" xml:space="preserve">0.0</text>
<rect x="2077.2" y="315.3" width="24.0" height="24.0" fill="#f7f7f7" stroke="#d6d6d6" stroke-width="1.5" rx="5"/>
<text x="2114.6" y="336.3" font-size="24.4" fill="#b6b6c4" font-family='"Liberation Sans", Arial, sans-serif' textLength="28.6" lengthAdjust="spacingAndGlyphs" xml:space="preserve">0.0</text>
<text x="2198.5" y="344.3" font-size="22.6" fill="#000008" font-family='"Liberation Sans", Arial, sans-serif' textLength="165.8" lengthAdjust="spacingAndGlyphs" xml:space="preserve">Motion: 3.00 km/s</text>
<rect x="1744.3" y="368.0" width="26.0" height="26.0" fill="#1262e2" rx="4.5"/>
<path d="M1750.9 382.6 l3.6 3.2 l8.8 -9.4" fill="none" stroke="#bfe4ff" stroke-width="1.7" stroke-linecap="round" stroke-linejoin="round"/>
<text x="1780.1" y="389.2" font-size="23.2" fill="#000008" font-family='"Liberation Sans", Arial, sans-serif' textLength="71.8" lengthAdjust="spacingAndGlyphs" xml:space="preserve">Circular</text>
<rect x="1877.0" y="369.0" width="24.0" height="24.0" fill="#f1f1f1" stroke="#5c5c5c" stroke-width="1.8" rx="5"/>
<text x="1913.5" y="375.5" font-size="20.6" fill="#000008" font-family='"Liberation Sans", Arial, sans-serif' textLength="125.2" lengthAdjust="spacingAndGlyphs" xml:space="preserve">Use assumed</text>
<text x="1914.5" y="401.0" font-size="20.6" fill="#000008" font-family='"Liberation Sans", Arial, sans-serif' textLength="120.2" lengthAdjust="spacingAndGlyphs" xml:space="preserve">dia (11.3 km)</text>
<rect x="2081.3" y="369.0" width="24.0" height="24.0" fill="#f1f1f1" stroke="#5c5c5c" stroke-width="1.8" rx="5"/>
<text x="2117.4" y="389.2" font-size="23.2" fill="#000008" font-family='"Liberation Sans", Arial, sans-serif' textLength="187.9" lengthAdjust="spacingAndGlyphs" xml:space="preserve">Include Miss events</text>
<rect x="1740.5" y="421.2" width="643.7" height="39.6" fill="#e0e1e1"/>
<rect x="1740.5" y="421.2" width="643.7" height="2.0" fill="#747474"/>
<rect x="1740.5" y="421.2" width="2.0" height="39.6" fill="#747474"/>
<rect x="1740.5" y="458.8" width="643.7" height="2.0" fill="#ffffff"/>
<rect x="2382.2" y="421.2" width="2.0" height="39.6" fill="#ffffff"/>
<text x="1756.7" y="449.9" font-size="24" fill="#a4a4ac" font-family='"Liberation Sans", Arial, sans-serif' font-weight="bold" textLength="220.7" lengthAdjust="spacingAndGlyphs" xml:space="preserve">Double stars - show</text>
<circle cx="2021" cy="443.4" r="12.4" fill="#c4c4c4"/>
<circle cx="2021" cy="443.4" r="4.5" fill="#f4f4f4"/>
<text x="2043.4" y="451.4" font-size="19.4" fill="#b0b0b8" font-family='"Liberation Sans", Arial, sans-serif' textLength="39.4" lengthAdjust="spacingAndGlyphs" xml:space="preserve">Both</text>
<circle cx="2124.5" cy="443.4" r="11.4" fill="#f7f7f7" stroke="#d6d6d6" stroke-width="1.5"/>
<text x="2147.0" y="451.4" font-size="19.4" fill="#b0b0b8" font-family='"Liberation Sans", Arial, sans-serif' textLength="63.8" lengthAdjust="spacingAndGlyphs" xml:space="preserve">Primary</text>
<circle cx="2255" cy="443.4" r="11.4" fill="#f7f7f7" stroke="#d6d6d6" stroke-width="1.5"/>
<text x="2277.3" y="451.4" font-size="19.4" fill="#b0b0b8" font-family='"Liberation Sans", Arial, sans-serif' textLength="88.0" lengthAdjust="spacingAndGlyphs" xml:space="preserve">Secondary</text>
<text x="1741.0" y="507.0" font-size="24" fill="#12a012" font-family='"Liberation Sans", Arial, sans-serif' font-weight="bold" textLength="200.2" lengthAdjust="spacingAndGlyphs" xml:space="preserve">Quality of the fit</text>
<rect x="1953.0" y="475.3" width="431.3" height="38.6" fill="#ffffff" stroke="#7a7a7a" stroke-width="1.4" rx="2"/>
<text x="1958.7" y="501.3" font-size="23.6" fill="#000008" font-family='"Liberation Sans", Arial, sans-serif' textLength="294.2" lengthAdjust="spacingAndGlyphs" xml:space="preserve">Astrometry only. No reliable size</text>
<path d="M2360.8 492.4 L2368.3 499.8 L2375.8 492.4" fill="none" stroke="#303030" stroke-width="1.7"/>
<text x="1792.5" y="546.5" font-size="24" fill="#b01226" font-family='"Liberation Sans", Arial, sans-serif' font-weight="bold" textLength="146.4" lengthAdjust="spacingAndGlyphs" xml:space="preserve">Review flags</text>
<rect x="1952.5" y="520.0" width="432.3" height="37.4" fill="#c2fcfc"/>
<rect x="1952.5" y="520.0" width="432.3" height="2.0" fill="#747474"/>
<rect x="1952.5" y="520.0" width="2.0" height="37.4" fill="#747474"/>
<rect x="1952.5" y="555.4" width="432.3" height="2.0" fill="#ffffff"/>
<rect x="2382.8" y="520.0" width="2.0" height="37.4" fill="#ffffff"/>
<rect x="1962.8" y="527.0" width="24.0" height="24.0" fill="#f1f1f1" stroke="#5c5c5c" stroke-width="1.8" rx="5"/>
<text x="2000.8" y="547.0" font-size="24.4" fill="#000008" font-family='"Liberation Sans", Arial, sans-serif' textLength="312.2" lengthAdjust="spacingAndGlyphs" xml:space="preserve">0 items are tagged for review</text>
<rect x="1723.4" y="562.0" width="668.6" height="163.7" fill="#e0fdfd"/>
<rect x="1723.4" y="562.0" width="668.6" height="2.6" fill="#6e6e6e"/>
<rect x="1723.4" y="562.0" width="2.6" height="163.7" fill="#6e6e6e"/>
<rect x="1723.4" y="723.4" width="668.6" height="2.4" fill="#ffffff"/>
<text x="1747.5" y="615.0" font-size="23.6" fill="#b01226" font-family='"Liberation Sans", Arial, sans-serif' font-weight="bold" text-anchor="middle" xml:space="preserve">P</text>
<text x="1747.5" y="641.6" font-size="23.6" fill="#b01226" font-family='"Liberation Sans", Arial, sans-serif' font-weight="bold" text-anchor="middle" xml:space="preserve">L</text>
<text x="1747.5" y="668.0" font-size="23.6" fill="#b01226" font-family='"Liberation Sans", Arial, sans-serif' font-weight="bold" text-anchor="middle" xml:space="preserve">O</text>
<text x="1747.5" y="693.0" font-size="23.6" fill="#b01226" font-family='"Liberation Sans", Arial, sans-serif' font-weight="bold" text-anchor="middle" xml:space="preserve">T</text>
<text x="1778.5" y="607.3" font-size="24.6" fill="#b01226" font-family='"Liberation Sans", Arial, sans-serif' font-weight="bold" textLength="63.6" lengthAdjust="spacingAndGlyphs" xml:space="preserve">Scale</text>
<rect x="1855.9" y="580.2" width="536.1" height="37.4" fill="#ffefb0"/>
<rect x="1866.8" y="590.8" width="515.9" height="7.2" fill="#d2d2d2" stroke="#c0c0c0" stroke-width="1"/>
<rect x="1872.2" y="610.4" width="1.5" height="6.2" fill="#9aa0b4"/>
<rect x="1897.5" y="610.4" width="1.5" height="6.2" fill="#9aa0b4"/>
<rect x="1922.7" y="610.4" width="1.5" height="6.2" fill="#9aa0b4"/>
<rect x="1947.8" y="610.4" width="1.5" height="6.2" fill="#9aa0b4"/>
<rect x="1973.0" y="610.4" width="1.5" height="6.2" fill="#9aa0b4"/>
<rect x="1998.2" y="610.4" width="1.5" height="6.2" fill="#9aa0b4"/>
<rect x="2023.5" y="610.4" width="1.5" height="6.2" fill="#9aa0b4"/>
<rect x="2048.7" y="610.4" width="1.5" height="6.2" fill="#9aa0b4"/>
<rect x="2073.8" y="610.4" width="1.5" height="6.2" fill="#9aa0b4"/>
<rect x="2099.1" y="610.4" width="1.5" height="6.2" fill="#9aa0b4"/>
<rect x="2124.2" y="610.4" width="1.5" height="6.2" fill="#9aa0b4"/>
<rect x="2149.4" y="610.4" width="1.5" height="6.2" fill="#9aa0b4"/>
<rect x="2174.7" y="610.4" width="1.5" height="6.2" fill="#9aa0b4"/>
<rect x="2199.8" y="610.4" width="1.5" height="6.2" fill="#9aa0b4"/>
<rect x="2225.1" y="610.4" width="1.5" height="6.2" fill="#9aa0b4"/>
<rect x="2250.2" y="610.4" width="1.5" height="6.2" fill="#9aa0b4"/>
<rect x="2275.4" y="610.4" width="1.5" height="6.2" fill="#9aa0b4"/>
<rect x="2300.7" y="610.4" width="1.5" height="6.2" fill="#9aa0b4"/>
<rect x="2325.8" y="610.4" width="1.5" height="6.2" fill="#9aa0b4"/>
<rect x="2351.1" y="610.4" width="1.5" height="6.2" fill="#9aa0b4"/>
<rect x="2376.2" y="610.4" width="1.5" height="6.2" fill="#9aa0b4"/>
<path d="M2117.7 586 L2130.2 586 L2130.2 598.7 L2123.95 605.7 L2117.7 598.7 Z" fill="#1070e0"/>
<text x="1778.5" y="659.4" font-size="24.6" fill="#b01226" font-family='"Liberation Sans", Arial, sans-serif' font-weight="bold" textLength="47.9" lengthAdjust="spacingAndGlyphs" xml:space="preserve">Size</text>
<rect x="1838.7" y="630.7" width="324.8" height="45.2" fill="#eafde4"/>
<rect x="1838.7" y="630.7" width="324.8" height="2.0" fill="#5a5a5a"/>
<rect x="1838.7" y="630.7" width="2.0" height="45.2" fill="#5a5a5a"/>
<rect x="1838.7" y="673.9" width="324.8" height="2.0" fill="#ffffff"/>
<rect x="2161.5" y="630.7" width="2.0" height="45.2" fill="#ffffff"/>
<circle cx="1871" cy="653" r="13" fill="#1262e2"/>
<circle cx="1871" cy="653" r="4.7" fill="#ffffff"/>
<text x="1894.9" y="661.0" font-size="24.6" fill="#b01226" font-family='"Liberation Sans", Arial, sans-serif' font-weight="bold" textLength="74.0" lengthAdjust="spacingAndGlyphs" xml:space="preserve">normal</text>
<circle cx="1999" cy="653" r="12" fill="#ececec" stroke="#5c5c5c" stroke-width="1.6"/>
<text x="2024.2" y="661.0" font-size="24.6" fill="#b01226" font-family='"Liberation Sans", Arial, sans-serif' font-weight="bold" textLength="34.5" lengthAdjust="spacingAndGlyphs" xml:space="preserve">x 2</text>
<circle cx="2087" cy="653" r="12" fill="#ececec" stroke="#5c5c5c" stroke-width="1.6"/>
<text x="2112.0" y="661.0" font-size="24.6" fill="#b01226" font-family='"Liberation Sans", Arial, sans-serif' font-weight="bold" textLength="34.6" lengthAdjust="spacingAndGlyphs" xml:space="preserve">x 5</text>
<text x="2208.8" y="661.0" font-size="24" fill="#c010c0" font-family='"Liberation Sans", Arial, sans-serif' font-weight="bold" textLength="142.5" lengthAdjust="spacingAndGlyphs" xml:space="preserve">Form opacity</text>
<rect x="2166.0" y="676.5" width="226.0" height="40.8" fill="#ffefb0"/>
<rect x="2178.5" y="689.0" width="201.5" height="6.5" fill="#d2d2d2" stroke="#c0c0c0" stroke-width="1"/>
<rect x="2186.2" y="711.0" width="1.5" height="6.0" fill="#9aa0b4"/>
<rect x="2223.8" y="711.0" width="1.5" height="6.0" fill="#9aa0b4"/>
<rect x="2261.4" y="711.0" width="1.5" height="6.0" fill="#9aa0b4"/>
<rect x="2299.1" y="711.0" width="1.5" height="6.0" fill="#9aa0b4"/>
<rect x="2336.7" y="711.0" width="1.5" height="6.0" fill="#9aa0b4"/>
<rect x="2374.2" y="711.0" width="1.5" height="6.0" fill="#9aa0b4"/>
<path d="M2366 680.5 L2381.7 680.5 L2381.7 698.5 L2373.85 705.5 L2366 698.5 Z" fill="#1070e0"/>
<text x="1780.0" y="711.0" font-size="24.6" fill="#b01226" font-family='"Liberation Sans", Arial, sans-serif' font-weight="bold" textLength="206.7" lengthAdjust="spacingAndGlyphs" xml:space="preserve">Scroll range x1.25</text>
<rect x="2004.0" y="690.6" width="23.0" height="23.0" fill="#f1f1f1" stroke="#5c5c5c" stroke-width="1.8" rx="5"/>
<text x="1749.0" y="769.9" font-size="25.2" fill="#000008" font-family='"Liberation Sans", Arial, sans-serif' textLength="188.1" lengthAdjust="spacingAndGlyphs" xml:space="preserve">RMS fit 0.3 ±0.0 km</text>
<rect x="1734.4" y="788.6" width="653.0" height="955.4" fill="#ffffff"/>
<rect x="1734.4" y="788.6" width="653.0" height="3.2" fill="#6c706c"/>
<rect x="1734.4" y="788.6" width="3.4" height="955.4" fill="#6c706c"/>
<rect x="1737.8" y="1711.9" width="649.6" height="32.0" fill="#ececec"/>
<rect x="2386.4" y="788.6" width="1.6" height="955.4" fill="#dcdcdc"/>
<rect x="1772.0" y="1725.3" width="525.5" height="4.4" fill="#727272" rx="2"/>
<rect x="1748.3" y="802.0" width="132.0" height="8.2" fill="#7226e2" rx="1.5"/>
<rect x="1750.4" y="828.7" width="5.2" height="5.2" fill="#ee22c4"/>
<rect x="1780.4" y="828.7" width="5.2" height="5.2" fill="#ee22c4"/>
<rect x="1810.2" y="828.7" width="5.2" height="5.2" fill="#ee22c4"/>
<rect x="1840.2" y="828.7" width="5.2" height="5.2" fill="#ee22c4"/>
<rect x="1870.4" y="828.7" width="5.2" height="5.2" fill="#ee22c4"/>
<text x="1925.9" y="815.0" font-size="21.4" fill="#000008" font-family='"Liberation Mono", "Courier New", monospace' textLength="14.7" lengthAdjust="spacingAndGlyphs" xml:space="preserve">1</text>
<text x="2008.6" y="815.0" font-size="21.4" fill="#000008" font-family='"Liberation Mono", "Courier New", monospace' textLength="377.5" lengthAdjust="spacingAndGlyphs" xml:space="preserve">W Gimple, near Greenvil</text>
<text x="1925.8" y="840.0" font-size="21.4" fill="#000008" font-family='"Liberation Mono", "Courier New", monospace' textLength="62.1" lengthAdjust="spacingAndGlyphs" xml:space="preserve">2(P)</text>
<text x="2007.3" y="840.0" font-size="21.4" fill="#000008" font-family='"Liberation Mono", "Courier New", monospace' textLength="149.1" lengthAdjust="spacingAndGlyphs" xml:space="preserve">Predicted</text>
<rect x="1306.5" y="1128.6" width="899.3" height="264.6" fill="#8fbce6" stroke="#4c4c58" stroke-width="1.8"/>
<text x="1311.2" y="1163.0" font-size="24" fill="#14207c" font-family='"Liberation Sans", Arial, sans-serif' font-weight="bold" textLength="76.6" lengthAdjust="spacingAndGlyphs" xml:space="preserve">DAMIT</text>
<rect x="1400.0" y="1136.5" width="28.4" height="33.8" fill="#fbfbfb" rx="4"/>
<rect x="1404.0" y="1140.0" width="20.4" height="26.0" fill="#08e408"/>
<text x="1414.4" y="1162.4" font-size="24.6" fill="#000" font-family='"Liberation Sans", Arial, sans-serif' font-weight="bold" text-anchor="middle" xml:space="preserve">1</text>
<rect x="1436.0" y="1136.5" width="28.8" height="33.8" fill="#eaeaee" rx="4"/>
<text x="1450.4" y="1162.0" font-size="22.4" fill="#b4b0ac" font-family='"Liberation Sans", Arial, sans-serif' text-anchor="middle" xml:space="preserve">2</text>
<rect x="1471.9" y="1136.5" width="28.8" height="33.8" fill="#eaeaee" rx="4"/>
<text x="1486.3" y="1162.0" font-size="22.4" fill="#b4b0ac" font-family='"Liberation Sans", Arial, sans-serif' text-anchor="middle" xml:space="preserve">3</text>
<rect x="1507.8" y="1136.5" width="28.8" height="33.8" fill="#eaeaee" rx="4"/>
<text x="1522.2" y="1162.0" font-size="22.4" fill="#b4b0ac" font-family='"Liberation Sans", Arial, sans-serif' text-anchor="middle" xml:space="preserve">4</text>
<rect x="1543.7" y="1136.5" width="28.8" height="33.8" fill="#eaeaee" rx="4"/>
<text x="1558.1" y="1162.0" font-size="22.4" fill="#b4b0ac" font-family='"Liberation Sans", Arial, sans-serif' text-anchor="middle" xml:space="preserve">5</text>
<rect x="1579.6" y="1136.5" width="28.8" height="33.8" fill="#eaeaee" rx="4"/>
<text x="1594.0" y="1162.0" font-size="22.4" fill="#b4b0ac" font-family='"Liberation Sans", Arial, sans-serif' text-anchor="middle" xml:space="preserve">6</text>
<rect x="1622.4" y="1136.5" width="138.6" height="35.0" fill="#fbfbfb" rx="4"/>
<rect x="1626.0" y="1140.5" width="131.4" height="27.0" fill="#9ee6f2"/>
<text x="1632.1" y="1161.9" font-size="24.4" fill="#06061c" font-family='"Liberation Sans", Arial, sans-serif' textLength="114.6" lengthAdjust="spacingAndGlyphs" xml:space="preserve">Light curves</text>
<text x="1774.3" y="1163.0" font-size="24" fill="#14207c" font-family='"Liberation Sans", Arial, sans-serif' font-weight="bold" textLength="61.2" lengthAdjust="spacingAndGlyphs" xml:space="preserve">ISAM</text>
<rect x="1847.7" y="1135.4" width="29.2" height="35.3" fill="#eaeaee" rx="4"/>
<text x="1862.3" y="1162.0" font-size="22.4" fill="#b4b0ac" font-family='"Liberation Sans", Arial, sans-serif' text-anchor="middle" xml:space="preserve">1</text>
<rect x="1895.7" y="1135.4" width="29.2" height="35.3" fill="#eaeaee" rx="4"/>
<text x="1910.3" y="1162.0" font-size="22.4" fill="#b4b0ac" font-family='"Liberation Sans", Arial, sans-serif' text-anchor="middle" xml:space="preserve">2</text>
<rect x="1943.7" y="1135.4" width="29.2" height="35.3" fill="#eaeaee" rx="4"/>
<text x="1958.3" y="1162.0" font-size="22.4" fill="#b4b0ac" font-family='"Liberation Sans", Arial, sans-serif' text-anchor="middle" xml:space="preserve">3</text>
<rect x="1991.6" y="1135.4" width="29.2" height="35.3" fill="#eaeaee" rx="4"/>
<text x="2006.2" y="1162.0" font-size="22.4" fill="#b4b0ac" font-family='"Liberation Sans", Arial, sans-serif' text-anchor="middle" xml:space="preserve">4</text>
<rect x="2039.6" y="1135.4" width="29.2" height="35.3" fill="#eaeaee" rx="4"/>
<text x="2054.2" y="1162.0" font-size="22.4" fill="#b4b0ac" font-family='"Liberation Sans", Arial, sans-serif' text-anchor="middle" xml:space="preserve">5</text>
<rect x="2087.6" y="1135.4" width="29.2" height="35.3" fill="#eaeaee" rx="4"/>
<text x="2102.2" y="1162.0" font-size="22.4" fill="#b4b0ac" font-family='"Liberation Sans", Arial, sans-serif' text-anchor="middle" xml:space="preserve">6</text>
<rect x="2136.2" y="1134.7" width="27.5" height="32.3" fill="#fbfbfb" rx="3"/>
<rect x="2140.0" y="1138.2" width="20.0" height="25.8" fill="#1010d8"/>
<text x="2150.0" y="1160.6" font-size="25" fill="#f4f410" font-family='"Liberation Sans", Arial, sans-serif' font-weight="bold" text-anchor="middle" xml:space="preserve">?</text>
<rect x="2168.2" y="1134.7" width="29.8" height="32.3" fill="#fbfbfb" rx="3"/>
<rect x="2172.0" y="1138.2" width="22.2" height="25.8" fill="#e60a26"/>
<text x="2183.1" y="1160.0" font-size="23" fill="#ffffff" font-family='"Liberation Sans", Arial, sans-serif' font-weight="bold" text-anchor="middle" textLength="15.0" lengthAdjust="spacingAndGlyphs" xml:space="preserve">X</text>
<text x="1321.9" y="1195.0" font-size="23.6" fill="#14207c" font-family='"Liberation Sans", Arial, sans-serif' textLength="67.3" lengthAdjust="spacingAndGlyphs" xml:space="preserve">Source</text>
<text x="1439.9" y="1195.0" font-size="23.6" fill="#14207c" font-family='"Liberation Sans", Arial, sans-serif' textLength="21.0" lengthAdjust="spacingAndGlyphs" xml:space="preserve">ID</text>
<text x="1508.1" y="1195.0" font-size="23.6" fill="#14207c" font-family='"Liberation Sans", Arial, sans-serif' textLength="77.2" lengthAdjust="spacingAndGlyphs" xml:space="preserve">Surf/Vol</text>
<rect x="1317.5" y="1203.2" width="76.2" height="35.5" fill="#e1e0e1"/>
<rect x="1317.5" y="1236.7" width="76.2" height="2.0" fill="#7c7c80"/>
<rect x="1317.5" y="1203.2" width="76.2" height="1.2" fill="#f6f6f6"/>
<text x="1322.7" y="1230.3" font-size="24" fill="#000008" font-family='"Liberation Sans", Arial, sans-serif' textLength="63.4" lengthAdjust="spacingAndGlyphs" xml:space="preserve">DAMIT</text>
<rect x="1399.0" y="1203.2" width="104.8" height="35.5" fill="#e1e0e1"/>
<rect x="1399.0" y="1236.7" width="104.8" height="2.0" fill="#7c7c80"/>
<rect x="1399.0" y="1203.2" width="104.8" height="1.2" fill="#f6f6f6"/>
<text x="1404.5" y="1230.3" font-size="24" fill="#000008" font-family='"Liberation Sans", Arial, sans-serif' textLength="60.2" lengthAdjust="spacingAndGlyphs" xml:space="preserve">12576</text>
<rect x="1509.1" y="1203.2" width="75.2" height="35.5" fill="#e1e0e1"/>
<rect x="1509.1" y="1236.7" width="75.2" height="2.0" fill="#7c7c80"/>
<rect x="1509.1" y="1203.2" width="75.2" height="1.2" fill="#f6f6f6"/>
<text x="1514.6" y="1230.3" font-size="24" fill="#000008" font-family='"Liberation Sans", Arial, sans-serif' textLength="52.8" lengthAdjust="spacingAndGlyphs" xml:space="preserve">1.148</text>
<rect x="1312.2" y="1243.0" width="67.8" height="40.6" fill="#fcfc08" stroke="#6c6420" stroke-width="1.8"/>
<text x="1326.7" y="1272.0" font-size="24.6" fill="#000" font-family='"Liberation Sans", Arial, sans-serif' font-weight="bold" textLength="36.7" lengthAdjust="spacingAndGlyphs" xml:space="preserve">Dia</text>
<text x="1387.2" y="1267.7" font-size="22.6" fill="#14207c" font-family='"Liberation Sans", Arial, sans-serif' font-style="italic" textLength="192.5" lengthAdjust="spacingAndGlyphs" xml:space="preserve">Values in memory =&gt;</text>
<rect x="1590.7" y="1176.4" width="600.7" height="96.6" fill="#fdf0b4"/>
<rect x="1590.7" y="1176.4" width="600.7" height="2.0" fill="#6a6a6a"/>
<rect x="1590.7" y="1176.4" width="2.0" height="96.6" fill="#6a6a6a"/>
<rect x="1590.7" y="1271.0" width="600.7" height="2.0" fill="#f8f8f8"/>
<rect x="2189.4" y="1176.4" width="2.0" height="96.6" fill="#f8f8f8"/>
<text x="1636.3" y="1197.2" font-size="23.6" fill="#000008" font-family='"Liberation Sans", Arial, sans-serif' textLength="86.6" lengthAdjust="spacingAndGlyphs" xml:space="preserve">Fit quality</text>
<text x="1792.1" y="1197.8" font-size="23.6" fill="#000008" font-family='"Liberation Sans", Arial, sans-serif' textLength="81.1" lengthAdjust="spacingAndGlyphs" xml:space="preserve">Ph Corrn</text>
<text x="1894.1" y="1197.8" font-size="23.6" fill="#000008" font-family='"Liberation Sans", Arial, sans-serif' textLength="114.4" lengthAdjust="spacingAndGlyphs" xml:space="preserve">Minimum dia</text>
<text x="2046.3" y="1199.4" font-size="23.6" fill="#000008" font-family='"Liberation Sans", Arial, sans-serif' textLength="119.5" lengthAdjust="spacingAndGlyphs" xml:space="preserve">Maximum dia</text>
<rect x="1595.4" y="1205.8" width="191.6" height="37.6" fill="#ffffff" stroke="#6e6e6e" stroke-width="1.5" rx="2"/>
<text x="1600.0" y="1231.7" font-size="24" fill="#000008" font-family='"Liberation Sans", Arial, sans-serif' textLength="113.7" lengthAdjust="spacingAndGlyphs" xml:space="preserve">Minimum dia</text>
<path d="M1762 1222.4 L1770 1230 L1778 1222.4" fill="none" stroke="#303030" stroke-width="1.7"/>
<rect x="1796.3" y="1205.0" width="77.2" height="36.3" fill="#e1e0e1"/>
<rect x="1796.3" y="1239.3" width="77.2" height="2.0" fill="#7c7c80"/>
<rect x="1796.3" y="1205.0" width="77.2" height="1.2" fill="#f6f6f6"/>
<text x="1802.9" y="1231.4" font-size="24" fill="#000008" font-family='"Liberation Sans", Arial, sans-serif' textLength="19.6" lengthAdjust="spacingAndGlyphs" xml:space="preserve">0°</text>
<rect x="1889.0" y="1205.0" width="76.0" height="36.3" fill="#e1e0e1"/>
<rect x="1889.0" y="1239.3" width="76.0" height="2.0" fill="#7c7c80"/>
<rect x="1889.0" y="1205.0" width="76.0" height="1.2" fill="#f6f6f6"/>
<text x="1894.7" y="1231.4" font-size="24" fill="#000008" font-family='"Liberation Sans", Arial, sans-serif' textLength="29.9" lengthAdjust="spacingAndGlyphs" xml:space="preserve">7.2</text>
<rect x="1969.5" y="1205.0" width="59.2" height="46.2" fill="#fbfbfb" rx="5"/>
<rect x="1974.0" y="1210.0" width="50.3" height="35.7" fill="#b2f208"/>
<text x="1981.9" y="1235.8" font-size="24" fill="#000" font-family='"Liberation Sans", Arial, sans-serif' textLength="30.7" lengthAdjust="spacingAndGlyphs" xml:space="preserve">Set</text>
<rect x="2045.7" y="1206.0" width="74.3" height="36.4" fill="#f2a2c0"/>
<rect x="2045.7" y="1240.4" width="74.3" height="2.0" fill="#7c7c80"/>
<rect x="2045.7" y="1206.0" width="74.3" height="1.2" fill="#f6f6f6"/>
<rect x="2125.0" y="1205.0" width="59.0" height="46.2" fill="#fbfbfb" rx="5"/>
<rect x="2130.2" y="1210.0" width="49.7" height="35.7" fill="#b2f208"/>
<text x="2137.6" y="1235.8" font-size="24" fill="#000" font-family='"Liberation Sans", Arial, sans-serif' textLength="30.7" lengthAdjust="spacingAndGlyphs" xml:space="preserve">Set</text>
<text x="1598.7" y="1267.7" font-size="23.6" fill="#6410c8" font-family='"Liberation Sans", Arial, sans-serif' textLength="113.5" lengthAdjust="spacingAndGlyphs" xml:space="preserve">Minimum dia</text>
<text x="1800.0" y="1265.6" font-size="23.6" fill="#6410c8" font-family='"Liberation Sans", Arial, sans-serif' textLength="20.5" lengthAdjust="spacingAndGlyphs" xml:space="preserve">0°</text>
<text x="1891.7" y="1265.6" font-size="23.6" fill="#6410c8" font-family='"Liberation Sans", Arial, sans-serif' textLength="31.8" lengthAdjust="spacingAndGlyphs" xml:space="preserve">7.2</text>
<text x="2049.1" y="1267.0" font-size="22" fill="#6410c8" font-family='"Liberation Sans", Arial, sans-serif' textLength="43.5" lengthAdjust="spacingAndGlyphs" xml:space="preserve">- - - -</text>
<text x="1322.8" y="1308.0" font-size="23.6" fill="#14207c" font-family='"Liberation Sans", Arial, sans-serif' textLength="107.2" lengthAdjust="spacingAndGlyphs" xml:space="preserve">Version info</text>
<rect x="1443.5" y="1284.7" width="537.5" height="33.9" fill="#e1e0e1"/>
<rect x="1443.5" y="1316.6" width="537.5" height="2.0" fill="#7c7c80"/>
<rect x="1443.5" y="1284.7" width="537.5" height="1.2" fill="#f6f6f6"/>
<text x="1447.5" y="1309.5" font-size="24" fill="#000008" font-family='"Liberation Sans", Arial, sans-serif' textLength="158.3" lengthAdjust="spacingAndGlyphs" xml:space="preserve">2022-11-29, Q=1</text>
<text x="1320.4" y="1357.3" font-size="23.6" fill="#14207c" font-family='"Liberation Sans", Arial, sans-serif' textLength="112.1" lengthAdjust="spacingAndGlyphs" xml:space="preserve">Image scale</text>
<rect x="1443.5" y="1332.3" width="538.2" height="43.4" fill="#fdf0b4"/>
<rect x="1456.2" y="1365.0" width="511.6" height="7.0" fill="#d2d2d2" stroke="#c0c0c0" stroke-width="1"/>
<rect x="1464.0" y="1342.5" width="1.5" height="7.2" fill="#9aa0b4"/>
<rect x="1476.0" y="1342.5" width="1.5" height="7.2" fill="#9aa0b4"/>
<rect x="1488.0" y="1342.5" width="1.5" height="7.2" fill="#9aa0b4"/>
<rect x="1500.1" y="1342.5" width="1.5" height="7.2" fill="#9aa0b4"/>
<rect x="1512.2" y="1342.5" width="1.5" height="7.2" fill="#9aa0b4"/>
<rect x="1524.2" y="1342.5" width="1.5" height="7.2" fill="#9aa0b4"/>
<rect x="1536.2" y="1342.5" width="1.5" height="7.2" fill="#9aa0b4"/>
<rect x="1548.3" y="1342.5" width="1.5" height="7.2" fill="#9aa0b4"/>
<rect x="1560.4" y="1342.5" width="1.5" height="7.2" fill="#9aa0b4"/>
<rect x="1572.4" y="1342.5" width="1.5" height="7.2" fill="#9aa0b4"/>
<rect x="1584.5" y="1342.5" width="1.5" height="7.2" fill="#9aa0b4"/>
<rect x="1596.5" y="1342.5" width="1.5" height="7.2" fill="#9aa0b4"/>
<rect x="1608.6" y="1342.5" width="1.5" height="7.2" fill="#9aa0b4"/>
<rect x="1620.6" y="1342.5" width="1.5" height="7.2" fill="#9aa0b4"/>
<rect x="1632.7" y="1342.5" width="1.5" height="7.2" fill="#9aa0b4"/>
<rect x="1644.7" y="1342.5" width="1.5" height="7.2" fill="#9aa0b4"/>
<rect x="1656.8" y="1342.5" width="1.5" height="7.2" fill="#9aa0b4"/>
<rect x="1668.8" y="1342.5" width="1.5" height="7.2" fill="#9aa0b4"/>
<rect x="1680.9" y="1342.5" width="1.5" height="7.2" fill="#9aa0b4"/>
<rect x="1692.9" y="1342.5" width="1.5" height="7.2" fill="#9aa0b4"/>
<rect x="1705.0" y="1342.5" width="1.5" height="7.2" fill="#9aa0b4"/>
<rect x="1717.0" y="1342.5" width="1.5" height="7.2" fill="#9aa0b4"/>
<rect x="1729.1" y="1342.5" width="1.5" height="7.2" fill="#9aa0b4"/>
<rect x="1741.1" y="1342.5" width="1.5" height="7.2" fill="#9aa0b4"/>
<rect x="1753.2" y="1342.5" width="1.5" height="7.2" fill="#9aa0b4"/>
<rect x="1765.2" y="1342.5" width="1.5" height="7.2" fill="#9aa0b4"/>
<rect x="1777.2" y="1342.5" width="1.5" height="7.2" fill="#9aa0b4"/>
<rect x="1789.3" y="1342.5" width="1.5" height="7.2" fill="#9aa0b4"/>
<rect x="1801.4" y="1342.5" width="1.5" height="7.2" fill="#9aa0b4"/>
<rect x="1813.4" y="1342.5" width="1.5" height="7.2" fill="#9aa0b4"/>
<rect x="1825.5" y="1342.5" width="1.5" height="7.2" fill="#9aa0b4"/>
<rect x="1837.5" y="1342.5" width="1.5" height="7.2" fill="#9aa0b4"/>
<rect x="1849.6" y="1342.5" width="1.5" height="7.2" fill="#9aa0b4"/>
<rect x="1861.6" y="1342.5" width="1.5" height="7.2" fill="#9aa0b4"/>
<rect x="1873.7" y="1342.5" width="1.5" height="7.2" fill="#9aa0b4"/>
<rect x="1885.7" y="1342.5" width="1.5" height="7.2" fill="#9aa0b4"/>
<rect x="1897.8" y="1342.5" width="1.5" height="7.2" fill="#9aa0b4"/>
<rect x="1909.8" y="1342.5" width="1.5" height="7.2" fill="#9aa0b4"/>
<rect x="1921.9" y="1342.5" width="1.5" height="7.2" fill="#9aa0b4"/>
<rect x="1933.9" y="1342.5" width="1.5" height="7.2" fill="#9aa0b4"/>
<rect x="1946.0" y="1342.5" width="1.5" height="7.2" fill="#9aa0b4"/>
<rect x="1958.0" y="1342.5" width="1.5" height="7.2" fill="#9aa0b4"/>
<path d="M1714 1375.7 L1714 1361.5 L1722.0 1354.5 L1730 1361.5 L1730 1375.7 Z" fill="#1070e0"/>
<rect x="2001.5" y="1289.9" width="192.7" height="90.5" fill="#fbfbfb" rx="5"/>
<rect x="2006.0" y="1294.3" width="184.2" height="81.7" fill="#f4a4bc"/>
<text x="2022.0" y="1329.6" font-size="24.6" fill="#e60a26" font-family='"Liberation Sans", Arial, sans-serif' font-weight="bold" textLength="147.9" lengthAdjust="spacingAndGlyphs" xml:space="preserve">Save/update</text>
<text x="2022.6" y="1355.0" font-size="24.6" fill="#e60a26" font-family='"Liberation Sans", Arial, sans-serif' font-weight="bold" textLength="146.2" lengthAdjust="spacingAndGlyphs" xml:space="preserve">model 12576</text>
</svg>
</body>
</html>
